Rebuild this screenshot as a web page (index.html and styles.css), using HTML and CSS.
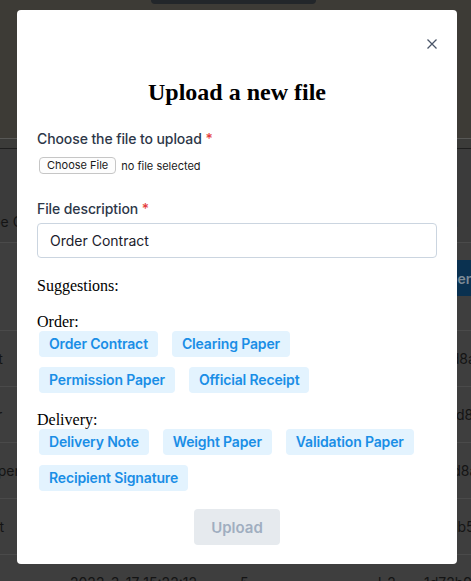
FILE: index.html
```html
<!DOCTYPE html>
<html lang="en">
<head>
  <meta charset="UTF-8" />
  <meta name="viewport" content="width=device-width, initial-scale=1" />
  <title>Documents</title>
  <link rel="stylesheet" href="styles.css">
</head>
<body>
  <div class="page">
    <header class="page-head">
      <div class="head-tab"></div>
    </header>
    <div class="tab-strip"></div>

    <div class="docs">
      <div class="doc-row doc-head">
        <span>Document Type Code</span>
        <span>Uploaded at</span>
        <span>Size</span>
        <span>User</span>
        <span>Hash</span>
      </div>
      <div class="doc-row doc-tools">
        <span></span><span></span><span></span><span></span>
        <span><button class="tool-btn">Open</button></span>
      </div>
      <div class="doc-row">
        <span>Order Contract</span>
        <span>2022-3-17 15:10:41</span>
        <span>3</span>
        <span>l-2</span>
        <span>5e1fd8a0</span>
      </div>
      <div class="doc-row">
        <span>Clearing Paper</span>
        <span>2022-3-17 15:12:05</span>
        <span>2</span>
        <span>l-2</span>
        <span>7c0ad8e2</span>
      </div>
      <div class="doc-row">
        <span>Permission Paper</span>
        <span>2022-3-17 15:14:33</span>
        <span>4</span>
        <span>l-2</span>
        <span>93f1d8a4</span>
      </div>
      <div class="doc-row">
        <span>Official Receipt</span>
        <span>2022-3-17 15:18:50</span>
        <span>1</span>
        <span>l-2</span>
        <span>2e6cb5d1</span>
      </div>
      <div class="doc-row">
        <span>Delivery Note</span>
        <span>2022-3-17 15:22:12</span>
        <span>5</span>
        <span>l-2</span>
        <span>1d72b9c3</span>
      </div>
    </div>
  </div>

  <div class="modal">
    <button class="modal-close" aria-label="Close">
      <svg width="10" height="10" viewBox="0 0 10 10">
        <path d="M0.5 0.5 L9.5 9.5 M9.5 0.5 L0.5 9.5" stroke="#4a5568" stroke-width="1.3" fill="none" />
      </svg>
    </button>

    <h2 class="modal-title">Upload a new file</h2>

    <label class="field-label">Choose the file to upload <span class="req">*</span></label>
    <div class="file-row">
      <span class="file-btn">Choose File</span>
      <span class="file-name">no file selected</span>
    </div>

    <label class="field-label label-desc" for="desc">File description <span class="req">*</span></label>
    <input class="text-input" id="desc" type="text" value="Order Contract" />

    <p class="suggest-title">Suggestions:</p>

    <div class="group">
      <div class="group-title">Order:</div>
      <div class="tags">
        <button class="tag">Order Contract</button>
        <button class="tag">Clearing Paper</button>
        <button class="tag">Permission Paper</button>
        <button class="tag">Official Receipt</button>
      </div>
    </div>

    <div class="group">
      <div class="group-title">Delivery:</div>
      <div class="tags">
        <button class="tag">Delivery Note</button>
        <button class="tag">Weight Paper</button>
        <button class="tag">Validation Paper</button>
        <button class="tag">Recipient Signature</button>
      </div>
    </div>

    <div class="actions">
      <button class="upload-btn" disabled>Upload</button>
    </div>
  </div>
</body>
</html>
```

FILE: styles.css
```css
* { margin: 0; padding: 0; box-sizing: border-box; }
body {
  background: #3e3e3e;
  overflow: hidden;
  font-family: "Inter", sans-serif;
}

/* dimmed page behind the dialog */
.page-head {
  height: 138px;
  background: #3d3b36;
}
.head-tab {
  width: 165px;
  height: 4px;
  margin-left: 151px;
  background: #22262a;
  border-radius: 0 0 5px 5px;
}
.tab-strip {
  height: 11px;
  background: #3b3b39;
  border-top: 1px solid #585856;
  border-bottom: 1px solid #1e1e1e;
}
.docs {
  width: 600px;
  margin-left: -96px;
  font-size: 14px;
  line-height: 20px;
  color: #141414;
}
.doc-row {
  display: grid;
  grid-template-columns: 166px 170px 138px 46px 1fr;
  align-items: center;
  height: 56px;
  border-bottom: 1px solid #4a4a4a;
  white-space: nowrap;
}
.doc-head {
  height: 94px;
  align-items: end;
  padding-bottom: 10px;
  background: #3b3b3b;
}
.doc-tools {
  height: 88px;
  align-items: start;
  padding-top: 17px;
}
.tool-btn {
  height: 36px;
  margin-left: 2px;
  padding: 0 12px;
  border: none;
  border-radius: 4px;
  background: #0a3150;
  color: #7d8b96;
  font: 600 14px "Inter", sans-serif;
}

/* dialog */
.modal {
  position: absolute;
  left: 17px;
  top: 10px;
  width: 440px;
  padding: 20px 20px 19px;
  background: #fff;
  border-radius: 4px;
  font-family: "Liberation Serif", serif;
}
.modal-close {
  position: absolute;
  top: 29px;
  right: 20px;
  width: 10px;
  height: 10px;
  border: none;
  background: none;
  display: flex;
}
.modal-title {
  margin-top: 48px;
  font-size: 24px;
  line-height: 28px;
  font-weight: 700;
  text-align: center;
  color: #000;
}
.field-label {
  display: block;
  margin-top: 23px;
  font: 500 14px/20px "Inter", sans-serif;
  letter-spacing: -0.1px;
  color: #2d3748;
}
.label-desc {
  margin-top: 25px;
}
.req {
  color: #e53e3e;
}
.file-row {
  display: flex;
  align-items: center;
  margin-top: 8px;
  height: 17px;
  font: 11px "Inter", sans-serif;
  color: #1a1a1a;
}
.file-btn {
  height: 17px;
  margin-left: 2px;
  padding: 0 7px;
  border: 1px solid #c6c6c6;
  border-radius: 4px;
  line-height: 15px;
  background: #fdfdfd;
}
.file-name {
  margin-left: 5px;
}
.text-input {
  display: block;
  width: 100%;
  height: 35px;
  margin-top: 4px;
  padding: 0 12px;
  border: 1px solid #cbd5e0;
  border-radius: 4px;
  font: 14px "Inter", sans-serif;
  color: #1a202c;
  outline: none;
}
.suggest-title {
  margin-top: 19px;
  font-size: 16px;
  line-height: 18px;
}
.group {
  margin-top: 18px;
}
.group-title {
  font-size: 16px;
  line-height: 18px;
}
.tags {
  display: flex;
  flex-wrap: wrap;
  gap: 10px 14px;
  padding: 0 16px 0 2px;
}
.tag {
  padding: 4px 10px;
  border: none;
  border-radius: 4px;
  background: #e3f3fe;
  color: #1a8ee6;
  font: 600 14px/18px "Inter", sans-serif;
  letter-spacing: -0.15px;
}
.actions {
  margin-top: 18px;
  text-align: center;
}
.upload-btn {
  height: 36px;
  padding: 0 17px;
  border: none;
  border-radius: 4px;
  background: #e6eaee;
  color: #a0aec0;
  font: 600 15px "Inter", sans-serif;
}
```
